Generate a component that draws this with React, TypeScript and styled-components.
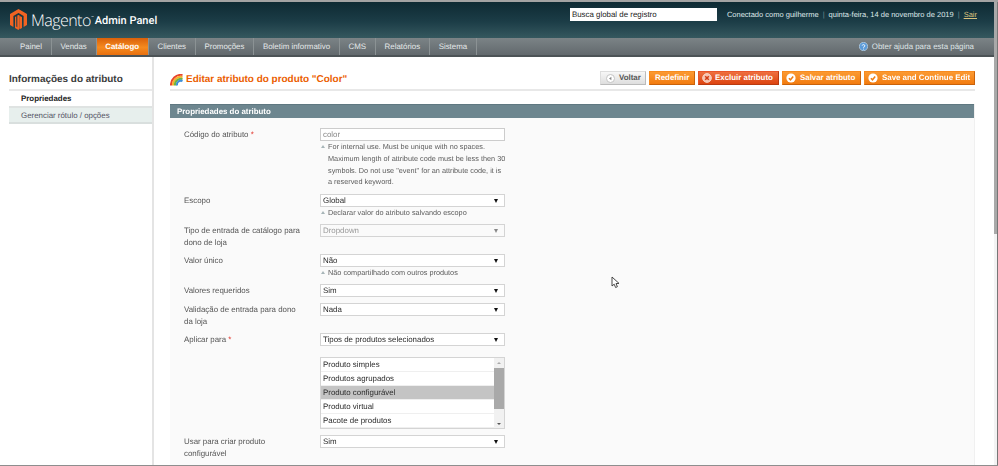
import React from 'react';
import styled, {createGlobalStyle} from 'styled-components';

const GlobalStyle = createGlobalStyle`
	html, body {
		margin: 0;
		padding: 0;
		background: #fff;
	}
	body {
		font: 7.9px/12px 'Liberation Sans', Arial, sans-serif;
		color: #444;
		text-rendering: geometricPrecision;
	}
`;

const Frame = styled.div`
	position: relative;
	display: flex;
	width: 998px;
	height: 466px;
	box-sizing: border-box;
	border-top: 2px solid #a3a3a3;
	border-bottom: 1px solid #8e8e8e;
	overflow: hidden;
	filter: blur(0.3px);
`;
const Page = styled.div`
	flex: 1;
	min-width: 0;
`;
const Gutter = styled.div`
	width: 4px;
	box-sizing: border-box;
	background: #f3f3f3;
	border-right: 1px solid #777;
`;
const GutterThumb = styled.div`
	height: 232px;
	background: #a9a9a9;
`;

const Header = styled.header`
	display: flex;
	align-items: flex-start;
	justify-content: space-between;
	height: 36px;
	box-sizing: border-box;
	padding: 6px 17px 0 10px;
	background: linear-gradient(#0e2a33, #1c3d47 55%, #35585f);
`;
const Logo = styled.div`
	display: flex;
	align-items: center;
	color: #fff;
	height: 23px;
`;
const LogoWord = styled.span`
	margin-left: 4px;
	font: 300 16px/20px 'Open Sans', sans-serif;
	letter-spacing: -0.55px;
`;
const LogoMark = styled.sup`
	font-size: 3px;
	line-height: 3px;
	margin-top: -5px;
`;
const LogoSub = styled.span`
	margin-left: 1px;
	padding-top: 2px;
	font: 500 11px/20px Roboto, sans-serif;
`;
const HeaderRight = styled.div`
	display: flex;
	align-items: center;
	height: 13px;
`;
const Search = styled.input`
	width: 147px;
	height: 13px;
	box-sizing: border-box;
	padding: 0 2px;
	border: 0;
	outline: 0;
	background: #fff;
	color: #222;
	font: 7.9px/13px 'Liberation Sans', sans-serif;
	text-rendering: geometricPrecision;
	margin-right: 10px;
`;
const UserInfo = styled.span`
	color: #dfe8ea;
	font-size: 7.5px;
	white-space: nowrap;
`;
const Divider = styled.span`
	color: #6f8a90;
	margin: 0 4px;
`;
const Logout = styled.a`
	color: #d9c27c;
	text-decoration: underline;
`;

const Nav = styled.nav`
	display: flex;
	justify-content: space-between;
	height: 19px;
	box-sizing: border-box;
	padding: 0 20px 0 11.25px;
	background: linear-gradient(#7b8386, #62696d);
	border-bottom: 2px solid #4c5356;
`;
const NavList = styled.div`
	display: flex;
`;
const NavItem = styled.a<{$active?: boolean}>`
	display: block;
	height: 17px;
	padding: 0 8.75px;
	box-sizing: border-box;
	line-height: 17px;
	color: ${(p) => (p.$active ? '#fff' : '#e4e8e9')};
	font-weight: ${(p) => (p.$active ? 'bold' : 'normal')};
	background: ${(p) => (p.$active ? 'linear-gradient(#d9600b, #f58a1f 55%, #e8700f)' : 'none')};
	border-right: 1px solid #8b9294;
`;
const Help = styled.div`
	display: flex;
	align-items: center;
	gap: 4px;
	color: #dfe4e6;
	font-size: 7.9px;
`;

const Body = styled.div`
	display: flex;
	height: 408px;
	background: #fff;
	padding-left: 9px;
`;
const Sidebar = styled.aside`
	width: 145px;
	box-sizing: border-box;
	padding-top: 15px;
	border-right: 2px solid #e4e4e4;
`;
const SideTitle = styled.h3`
	margin: 0;
	height: 19px;
	box-sizing: border-box;
	border-bottom: 2px solid #e9e9e9;
	color: #3b3b3b;
	font: bold 9.95px/16px 'Liberation Sans', sans-serif;
	white-space: nowrap;
`;
const SideItem = styled.a<{$active?: boolean}>`
	display: block;
	padding-left: 12px;
	height: ${(p) => (p.$active ? '15px' : '18px')};
	line-height: 16px;
	color: ${(p) => (p.$active ? '#222' : '#556')};
	font-weight: ${(p) => (p.$active ? 'bold' : 'normal')};
	background: ${(p) => (p.$active ? '#fff' : '#e7efed')};
	box-sizing: border-box;
	border-bottom: ${(p) => (p.$active ? 'none' : '2px solid #d9dfde')};
	border-top: ${(p) => (p.$active ? 'none' : '2px solid #dfe3e2')};
`;

const Content = styled.main`
	width: 805px;
	margin-left: 16px;
	display: flex;
	flex-direction: column;
`;
const TitleBar = styled.div`
	display: flex;
	align-items: flex-start;
	justify-content: space-between;
	height: 34px;
	box-sizing: border-box;
	padding-top: 14px;
	border-bottom: 2px solid #e8e8e8;
`;
const TitleText = styled.h3`
	display: flex;
	align-items: center;
	gap: 3px;
	margin: 1px 0 0;
	color: #eb5e00;
	font: bold 9.95px/16px 'Liberation Sans', sans-serif;
	white-space: nowrap;
`;
const Buttons = styled.div`
	display: flex;
	gap: 3px;
`;
const Button = styled.button<{$kind: 'plain' | 'main' | 'danger'; $w: number; $pad?: number; $gap?: number}>`
	display: flex;
	align-items: center;
	justify-content: flex-start;
	gap: ${(p) => p.$gap ?? 4}px;
	width: ${(p) => p.$w}px;
	height: 14px;
	padding: 0 0 0 ${(p) => p.$pad ?? 3}px;
	box-sizing: border-box;
	font: bold 7.9px/12px 'Liberation Sans', sans-serif;
	text-rendering: geometricPrecision;
	white-space: nowrap;
	border-style: solid;
	border-width: 1px;
	color: ${(p) => (p.$kind === 'plain' ? '#555' : '#fff')};
	border-color: ${(p) => (p.$kind === 'plain' ? '#ddd #bbb #bbb #ddd' : p.$kind === 'danger' ? '#e8552a #b93a10 #b93a10 #e8552a' : '#f78a1e #c9620a #c9620a #f78a1e')};
	background: ${(p) =>
		p.$kind === 'plain'
			? 'linear-gradient(#f7f7f7, #dedede)'
			: p.$kind === 'danger'
				? 'linear-gradient(#ee6f3f, #dd4410)'
				: 'linear-gradient(#fb9a32, #f27b0f)'};
	svg {
		flex: none;
	}
`;

const Panel = styled.section`
	margin-top: 13px;
	flex: 1;
	background: #fafafa;
	border-right: 1px solid #f0f0f0;
`;
const PanelHead = styled.div`
	height: 14px;
	padding-left: 7px;
	background: #6d868f;
	border-top: 1px solid #5f7881;
	box-sizing: border-box;
	color: #fff;
	font-weight: bold;
	line-height: 13px;
`;
const Form = styled.div`
	padding: 10px 0 0 14px;
`;
const Row = styled.div`
	display: grid;
	grid-template-columns: 136px 185px;
	margin-bottom: 6px;
`;
const Label = styled.label`
	color: #555;
	line-height: 12px;
	padding-right: 14px;
	margin: 1px 0 -1px;
`;
const Required = styled.span`
	color: #e0261c;
`;
const TextField = styled.div`
	height: 13px;
	box-sizing: border-box;
	padding-left: 2px;
	background: #fff;
	border: 1px solid #ccc;
	color: #888;
	line-height: 11px;
`;
const SelectField = styled.div<{$disabled?: boolean}>`
	position: relative;
	height: 13px;
	box-sizing: border-box;
	padding-left: 2px;
	background: ${(p) => (p.$disabled ? '#fafafa' : '#fff')};
	border: 1px solid #d4d4d4;
	color: ${(p) => (p.$disabled ? '#999' : '#2c2c2c')};
	line-height: 11px;
	&::after {
		content: '';
		position: absolute;
		right: 6px;
		top: 4px;
		border-style: solid;
		border-width: 4px 2.2px 0;
		border-color: ${(p) => (p.$disabled ? '#888' : '#111')} transparent transparent;
	}
`;
const Note = styled.div<{$lines?: number}>`
	position: relative;
	padding-left: 8px;
	color: #5c5c5c;
	font-size: 7.3px;
	line-height: ${(p) => (p.$lines ? 47 / p.$lines : 11)}px;
	white-space: nowrap;
	&::before {
		content: '';
		position: absolute;
		left: 1px;
		top: 4px;
		border-style: solid;
		border-width: 0 2.5px 3px;
		border-color: transparent transparent #a7b5b8;
	}
`;
const ListSpacer = styled.div`
	margin-top: 11px;
`;
const ListBox = styled.div`
	display: flex;
	height: 72px;
	box-sizing: border-box;
	background: #fff;
	border: 1px solid #d4d4d4;
`;
const ListItems = styled.div`
	flex: 1;
`;
const ListItem = styled.div<{$selected?: boolean}>`
	height: 14px;
	box-sizing: border-box;
	padding-left: 2px;
	line-height: 13px;
	color: #2c2c2c;
	background: ${(p) => (p.$selected ? '#c4c4c4' : '#fff')};
	border-bottom: 1px solid #efefef;
`;
const ListScroll = styled.div`
	display: flex;
	flex-direction: column;
	align-items: center;
	justify-content: space-between;
	position: relative;
	width: 10px;
	background: #f1f1f1;
	padding: 4px 0 3px;
	box-sizing: border-box;
`;
const ScrollThumb = styled.div`
	position: absolute;
	left: 0;
	right: 0;
	top: 10px;
	height: 41px;
	background: #a9a9a9;
`;
const ArrowUp = styled.span`
	border-style: solid;
	border-width: 0 2px 2px;
	border-color: transparent transparent #aaa;
`;
const ArrowDown = styled.span`
	border-style: solid;
	border-width: 2px 2px 0;
	border-color: #555 transparent transparent;
`;
const Cursor = styled.svg`
	position: absolute;
	left: 611px;
	top: 274px;
`;

const MagentoIcon = () => (
	<svg width="17" height="21" viewBox="0 0 17 21">
		<path d="M8.5 0 L17 5 V16 L13.6 18 V7 L8.5 4 L3.4 7 V18 L0 16 V5 Z" fill="#f26322" />
		<path d="M7.3 6.6 L8.5 6 L9.7 6.6 V19.3 L8.5 21 L5 18.9 V8 L6.3 7.3 V17.6 L7.3 18.2 Z" fill="#f26322" />
		<path d="M9.7 7 L12 8 V18.9 L9.7 20.2 Z" fill="#f26322" />
	</svg>
);

const RainbowIcon = () => (
	<svg width="13" height="12" viewBox="0 0 13 12">
		<path d="M1 11.5 A10 10 0 0 1 12.5 1" fill="none" stroke="#e8452c" strokeWidth="2" />
		<path d="M3 11.5 A8 8 0 0 1 12.5 3" fill="none" stroke="#f6b02c" strokeWidth="2" />
		<path d="M5 11.5 A6 6 0 0 1 12.5 5" fill="none" stroke="#6db543" strokeWidth="2" />
		<path d="M7 11.5 A4 4 0 0 1 12.5 7" fill="none" stroke="#3f8fd6" strokeWidth="2" />
	</svg>
);

const HelpIcon = () => (
	<svg width="9" height="9" viewBox="0 0 9 9">
		<circle cx="4.5" cy="4.5" r="4.2" fill="#5c9bd8" stroke="#cfe0ee" strokeWidth="0.6" />
		<path d="M3.2 3.6 A1.3 1.2 0 1 1 4.6 5 V5.6" fill="none" stroke="#fff" strokeWidth="0.9" />
		<circle cx="4.6" cy="6.9" r="0.5" fill="#fff" />
	</svg>
);

const BackIcon = () => (
	<svg width="9" height="9" viewBox="0 0 9 9">
		<circle cx="4.5" cy="4.5" r="4" fill="#fff" stroke="#c4c4c4" />
		<path d="M5.4 2.8 L3 4.5 L5.4 6.2 Z" fill="#888" />
	</svg>
);

const DeleteIcon = () => (
	<svg width="10" height="10" viewBox="0 0 10 10">
		<circle cx="5" cy="5" r="4.4" fill="#f6c3b0" stroke="#f9ddd2" strokeWidth="0.8" />
		<path d="M3.2 3.2 L6.8 6.8 M6.8 3.2 L3.2 6.8" stroke="#d23b12" strokeWidth="1.5" />
	</svg>
);

const SaveIcon = () => (
	<svg width="10" height="10" viewBox="0 0 10 10">
		<circle cx="5" cy="5" r="4.6" fill="#fff" />
		<path d="M2.9 5.2 L4.5 6.8 L7.2 3.5" fill="none" stroke="#ee7c12" strokeWidth="1.5" />
	</svg>
);

const navItems = ['Painel', 'Vendas', 'Catálogo', 'Clientes', 'Promoções', 'Boletim informativo', 'CMS', 'Relatórios', 'Sistema'];

const App = () => {
	return (
		<>
			<GlobalStyle />
			<Frame>
				<Page>
					<Header>
						<Logo>
							<MagentoIcon />
							<LogoWord>Magento</LogoWord>
							<LogoMark>™</LogoMark>
							<LogoSub>Admin Panel</LogoSub>
						</Logo>
						<HeaderRight>
							<Search readOnly value="Busca global de registro" />
							<UserInfo>
								Conectado como guilherme<Divider>|</Divider>quinta-feira, 14 de novembro de 2019<Divider>|</Divider>
								<Logout>Sair</Logout>
							</UserInfo>
						</HeaderRight>
					</Header>
					<Nav>
						<NavList>
							{navItems.map((item) => (
								<NavItem key={item} $active={item === 'Catálogo'}>
									{item}
								</NavItem>
							))}
						</NavList>
						<Help>
							<HelpIcon />
							Obter ajuda para esta página
						</Help>
					</Nav>
					<Body>
						<Sidebar>
							<SideTitle>Informações do atributo</SideTitle>
							<SideItem $active>Propriedades</SideItem>
							<SideItem>Gerenciar rótulo / opções</SideItem>
						</Sidebar>
						<Content>
							<TitleBar>
								<TitleText>
									<RainbowIcon />
									Editar atributo do produto "Color"
								</TitleText>
								<Buttons>
									<Button $kind="plain" $w={46} $pad={5}>
										<BackIcon />
										Voltar
									</Button>
									<Button $kind="main" $w={46} $pad={5}>
										Redefinir
									</Button>
									<Button $kind="danger" $w={81} $gap={3}>
										<DeleteIcon />
										Excluir atributo
									</Button>
									<Button $kind="main" $w={79}>
										<SaveIcon />
										Salvar atributo
									</Button>
									<Button $kind="main" $w={111}>
										<SaveIcon />
										Save and Continue Edit
									</Button>
								</Buttons>
							</TitleBar>
							<Panel>
								<PanelHead>Propriedades do atributo</PanelHead>
								<Form>
									<Row>
										<Label>
											Código do atributo <Required>*</Required>
										</Label>
										<div>
											<TextField>color</TextField>
											<Note $lines={4}>
												For internal use. Must be unique with no spaces.
												<br />
												Maximum length of attribute code must be less then 30
												<br />
												symbols. Do not use "event" for an attribute code, it is
												<br />a reserved keyword.
											</Note>
										</div>
									</Row>
									<Row>
										<Label>Escopo</Label>
										<div>
											<SelectField>Global</SelectField>
											<Note>Declarar valor do atributo salvando escopo</Note>
										</div>
									</Row>
									<Row>
										<Label>Tipo de entrada de catálogo para dono de loja</Label>
										<SelectField $disabled>Dropdown</SelectField>
									</Row>
									<Row>
										<Label>Valor único</Label>
										<div>
											<SelectField>Não</SelectField>
											<Note>Não compartilhado com outros produtos</Note>
										</div>
									</Row>
									<Row>
										<Label>Valores requeridos</Label>
										<SelectField>Sim</SelectField>
									</Row>
									<Row>
										<Label>Validação de entrada para dono da loja</Label>
										<SelectField>Nada</SelectField>
									</Row>
									<Row>
										<Label>
											Aplicar para <Required>*</Required>
										</Label>
										<div>
											<SelectField>Tipos de produtos selecionados</SelectField>
											<ListSpacer>
												<ListBox>
													<ListItems>
														<ListItem>Produto simples</ListItem>
														<ListItem>Produtos agrupados</ListItem>
														<ListItem $selected>Produto configurável</ListItem>
														<ListItem>Produto virtual</ListItem>
														<ListItem>Pacote de produtos</ListItem>
													</ListItems>
													<ListScroll>
														<ArrowUp />
														<ScrollThumb />
														<ArrowDown />
													</ListScroll>
												</ListBox>
											</ListSpacer>
										</div>
									</Row>
									<Row>
										<Label>Usar para criar produto configurável</Label>
										<SelectField>Sim</SelectField>
									</Row>
								</Form>
							</Panel>
						</Content>
					</Body>
				</Page>
				<Gutter>
					<GutterThumb />
				</Gutter>
				<Cursor width="9" height="13" viewBox="0 0 9 13">
					<path d="M1 1 L1 10 L3.2 8.2 L4.6 11.5 L6.4 10.7 L5 7.6 L8 7.4 Z" fill="#fff" stroke="#333" strokeWidth="0.9" />
				</Cursor>
			</Frame>
		</>
	);
};

export default App;
